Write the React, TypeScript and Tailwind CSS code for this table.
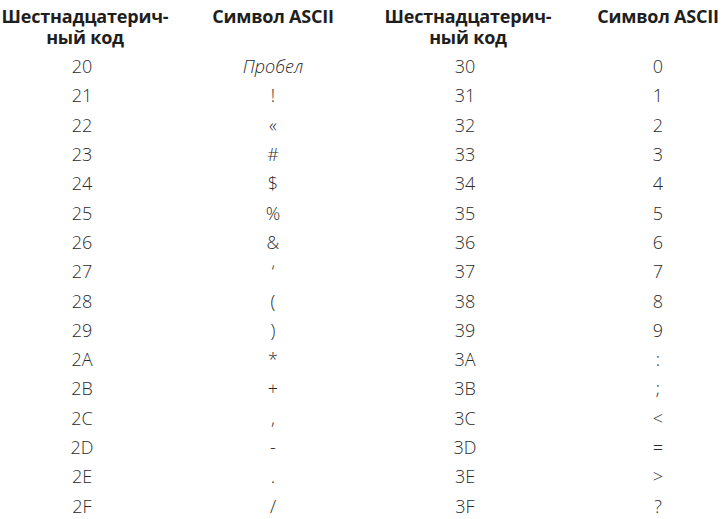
import React from "react";

const left: [string, string][] = [
  ["20", "Пробел"],
  ["21", "!"],
  ["22", "«"],
  ["23", "#"],
  ["24", "$"],
  ["25", "%"],
  ["26", "&"],
  ["27", "‘"],
  ["28", "("],
  ["29", ")"],
  ["2A", "*"],
  ["2B", "+"],
  ["2C", ","],
  ["2D", "-"],
  ["2E", "."],
  ["2F", "/"],
];
const right: [string, string][] = [
  ["30", "0"],
  ["31", "1"],
  ["32", "2"],
  ["33", "3"],
  ["34", "4"],
  ["35", "5"],
  ["36", "6"],
  ["37", "7"],
  ["38", "8"],
  ["39", "9"],
  ["3A", ":"],
  ["3B", ";"],
  ["3C", "<"],
  ["3D", "="],
  ["3E", ">"],
  ["3F", "?"],
];

const head = "pt-[6px] text-center text-[18px] leading-[21px] font-bold tracking-[-0.2px] text-[#1e1e1e]";
const cell = "h-[29.3px] flex items-center justify-center text-[18px] font-light text-[#2b2b2b]";

export default function App() {
  return (
    <div className="w-[722px] h-[519px] overflow-hidden bg-white font-['Open_Sans',sans-serif]">
      <div className="grid grid-cols-[170px_206px_184px_162px]">
        <div className={head + " pb-[4px]"}>
          Шестнадцатерич-
          <br />
          ный код
        </div>
        <div className={head}>Символ ASCII</div>
        <div className={head}>
          Шестнадцатерич-
          <br />
          ный код
        </div>
        <div className={head + " pl-[34px]"}>Символ ASCII</div>
        {left.map((l, i) => {
          const r = right[i];
          return (
            <React.Fragment key={l[0]}>
              <div className={cell + " pr-[6px]"}>{l[0]}</div>
              <div className={cell + (i === 0 ? " italic" : "")}>{l[1]}</div>
              <div className={cell + " pr-[6px]"}>{r[0]}</div>
              <div className={cell + " pl-[34px]"}>{r[1]}</div>
            </React.Fragment>
          );
        })}
      </div>
    </div>
  );
}
